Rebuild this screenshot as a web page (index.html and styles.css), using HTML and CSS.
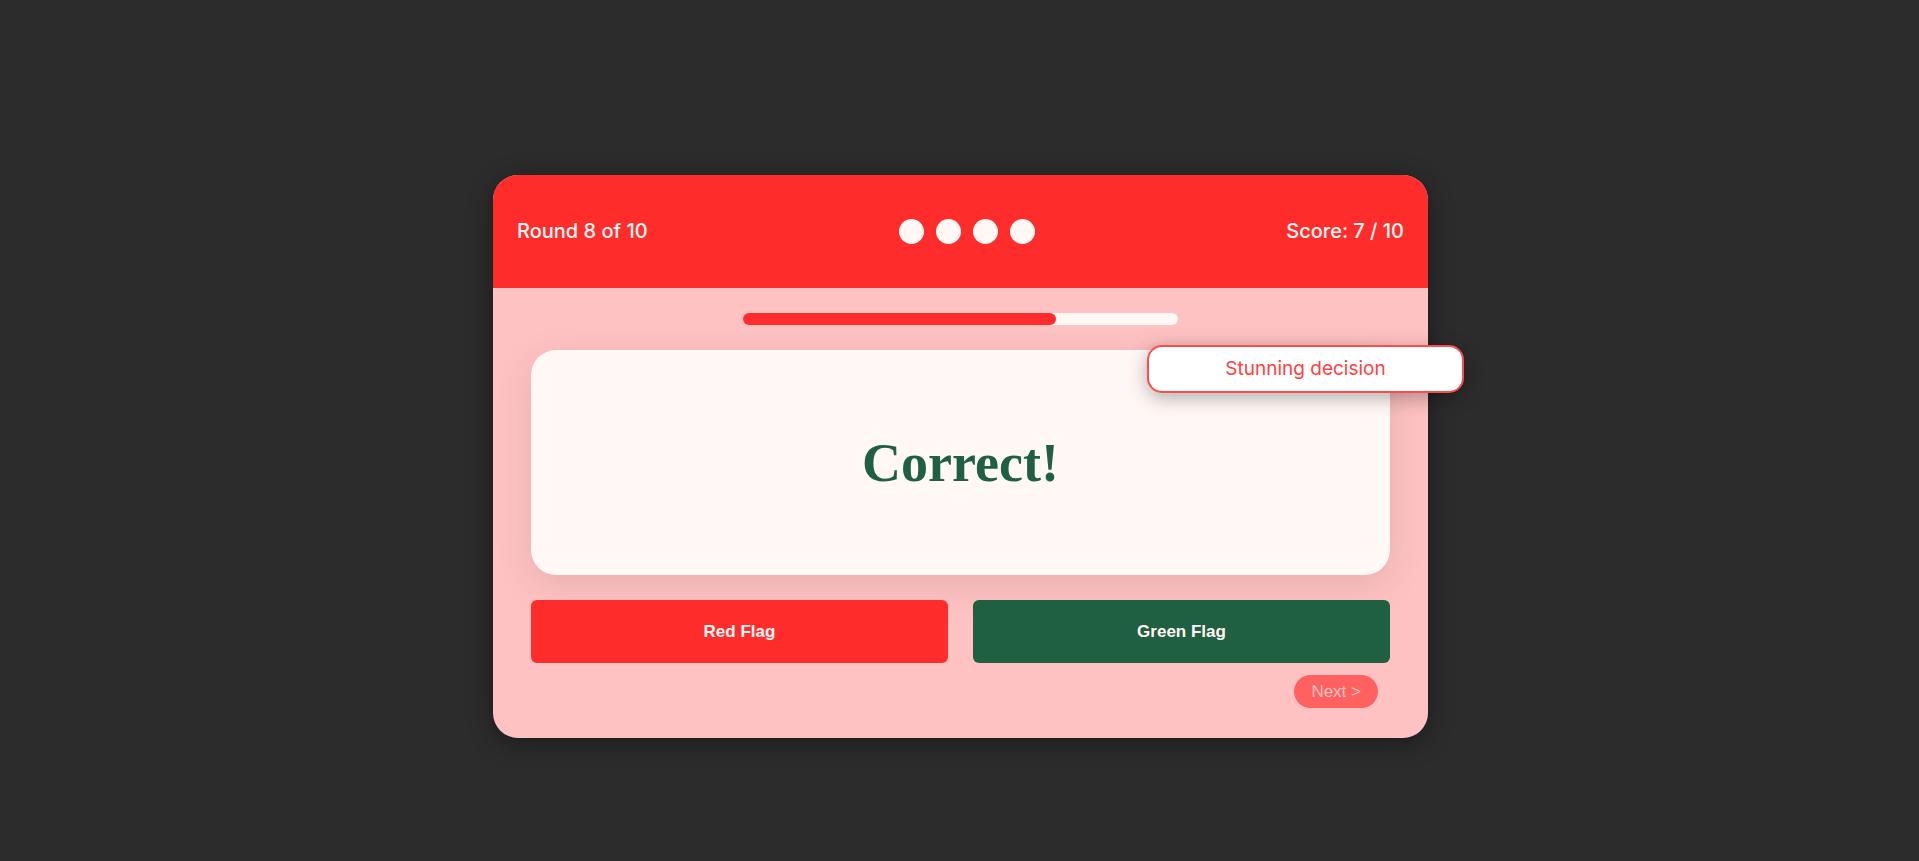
FILE: index.html
```html
<!DOCTYPE html>
<html lang="en">
<head>
<meta charset="utf-8">
<meta name="viewport" content="width=device-width, initial-scale=1">
<title>Red Flag or Green Flag</title>
<link rel="stylesheet" href="styles.css">
</head>
<body>
<main class="game">
  <header class="game-header">
    <p class="status">Round 8 of 10</p>
    <div class="dots"><span class="dot"></span><span class="dot"></span><span class="dot"></span><span class="dot"></span></div>
    <p class="status">Score: 7 / 10</p>
  </header>
  <div class="game-body">
    <div class="progress" role="progressbar" aria-label="Progress" aria-valuenow="72" aria-valuemin="0" aria-valuemax="100"><div class="progress-fill" style="width: 72%"></div></div>
    <section class="prompt">
      <h1 class="verdict">Correct!</h1>
      <p class="toast" role="status">Stunning decision</p>
    </section>
    <div class="choices">
      <button class="choice choice-red" type="button">Red Flag</button>
      <button class="choice choice-green" type="button">Green Flag</button>
    </div>
    <div class="actions"><button class="next" type="button">Next &gt;</button></div>
  </div>
</main>
</body>
</html>
```
FILE: styles.css
```css
* { box-sizing: border-box; }

body {
  margin: 0;
  padding: 175px 24px 48px 26px;
  background: #2c2c2c;
  font-family: Inter, "Liberation Sans", sans-serif;
}

.game {
  max-width: 935px;
  margin: 0 auto;
  border-radius: 25px;
  background: #ffc2c2;
  box-shadow: 0 5px 25px rgba(0, 0, 0, 0.4);
}

.game-header {
  display: flex;
  align-items: center;
  justify-content: space-between;
  padding: 44px 24px;
  border-radius: 25px 25px 0 0;
  background: #ff2c2c;
  color: #fff8f5;
}

.status {
  margin: 0;
  font-size: 20px;
  font-weight: 500;
  line-height: 25px;
}

.dots { display: flex; gap: 12px; }

.dot {
  width: 25px;
  height: 25px;
  border-radius: 50%;
  background: #fff8f5;
}

.game-body { padding: 25px 38px 30px; }

.progress {
  width: 435px;
  max-width: 100%;
  height: 12px;
  margin: 0 auto 25px;
  border-radius: 6px;
  background: #fff8f5;
}

.progress-fill {
  height: 100%;
  border-radius: 6px;
  background: #ff2c2c;
}

.prompt {
  position: relative;
  display: grid;
  place-items: center;
  min-height: 225px;
  border-radius: 25px;
  background: #fff8f5;
  box-shadow: 0 10px 38px rgba(0, 0, 0, 0.1);
}

.verdict {
  margin: 0;
  color: #1f5f42;
  font-family: "Liberation Serif", serif;
  font-size: 54px;
  font-weight: 700;
  line-height: 60px;
}

.toast {
  position: absolute;
  top: -5px;
  right: -74px;
  width: 317px;
  margin: 0;
  padding: 10px;
  border: 2px solid #ff4b4b;
  border-radius: 15px;
  background: #fff;
  box-shadow: 0 5px 19px rgba(0, 0, 0, 0.3);
  color: #ff4141;
  font-size: 19px;
  line-height: 24px;
  text-align: center;
}

.choices {
  position: relative;
  display: grid;
  grid-template-columns: 1fr 1fr;
  gap: 25px;
  margin-top: 25px;
}

.choice {
  padding: 20px;
  border: 0;
  border-radius: 6px;
  color: #fff8f5;
  font-family: "Liberation Sans", Arial, sans-serif;
  font-size: 17px;
  font-weight: 700;
  line-height: 23px;
}

.choice-red { background: #ff2c2c; }
.choice-green { background: #1f5f42; }

.actions {
  display: flex;
  justify-content: flex-end;
  padding: 12px 12px 0;
}

.next {
  padding: 6px 17px;
  border: 0;
  border-radius: 17px;
  background: #ff6060;
  color: #ffc2c2;
  font-family: "Liberation Sans", Arial, sans-serif;
  font-size: 17px;
  line-height: 21px;
}
```
